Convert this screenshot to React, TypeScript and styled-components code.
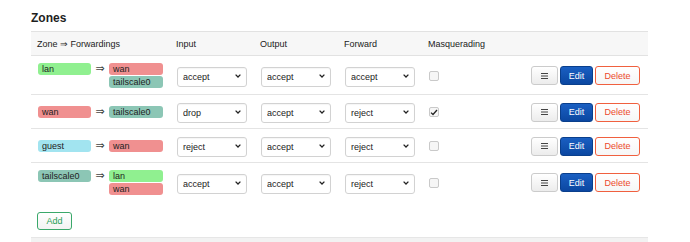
import React from "react";
import styled, { createGlobalStyle } from "styled-components";

const GlobalStyle = createGlobalStyle`
  body {
    margin: 0;
    background: #fff;
    font-family: "Liberation Sans", Arial, sans-serif;
    color: #333;
  }
`;

const StyledPage = styled.div`
  width: 617px;
  padding: 11px 0 0 31px;
`;

const StyledTitle = styled.h3`
  margin: 0 0 6px;
  font-size: 12px;
  line-height: 14px;
  font-weight: bold;
  color: #1e1e1e;
`;

const columns = "139px 84px 84px 84px 1fr auto";

const StyledHeader = styled.div`
  display: grid;
  grid-template-columns: ${columns};
  align-items: center;
  height: 25px;
  box-sizing: border-box;
  background: #f7f7f7;
  border-top: 1px solid #e2e2e2;
  border-bottom: 1px solid #e2e2e2;
  font-size: 9px;
  color: #222;

  > div {
    padding: 0 7px 0 6px;
  }
`;

const StyledRow = styled.div<{ last?: boolean }>`
  display: grid;
  grid-template-columns: ${columns};
  align-items: center;
  padding: 7px 0 6px;
  border-bottom: ${({ last }) => (last ? "none" : "1px solid #e4e4e4")};
`;

const StyledCell = styled.div`
  padding: 0 7px;
  display: flex;
  align-items: center;
`;

const StyledZoneCell = styled(StyledCell)`
  align-items: flex-start;
`;

const StyledArrow = styled.span`
  width: 18px;
  text-align: center;
  font-size: 11px;
  line-height: 11px;
  color: #444;
  font-family: "DejaVu Sans", sans-serif;
`;

const StyledDest = styled.div`
  display: flex;
  flex-direction: column;
  gap: 1px;
`;

const StyledBadge = styled.span<{ color: string }>`
  display: block;
  width: 54px;
  height: 12px;
  box-sizing: border-box;
  padding-left: 4px;
  border-radius: 3px;
  background: ${({ color }) => color};
  font-size: 9px;
  line-height: 12px;
  color: #222;
`;

const StyledSelectWrap = styled.div`
  position: relative;
  width: 71px;
  height: 20px;
`;

const StyledSelect = styled.select`
  appearance: none;
  width: 100%;
  height: 100%;
  box-sizing: border-box;
  border: 1px solid #d2d2d2;
  border-radius: 3px;
  background: #fff;
  padding: 0 0 0 5px;
  font-family: inherit;
  font-size: 9px;
  color: #222;
  box-shadow: inset 0 1px 1px rgba(0, 0, 0, 0.04);
  outline: none;
`;

const StyledChevron = styled.svg`
  position: absolute;
  right: 6px;
  top: 8px;
  pointer-events: none;
`;

const StyledCheck = styled.span`
  display: flex;
  align-items: center;
  justify-content: center;
  width: 10px;
  height: 10px;
  box-sizing: border-box;
  border: 1px solid #c9c9c9;
  border-radius: 2px;
  background: #f6f6f6;
`;

const StyledActions = styled.div`
  display: flex;
  gap: 2px;
  padding-right: 8px;
  justify-self: end;
`;

const buttonBase = `
  height: 19px;
  box-sizing: border-box;
  border-radius: 3px;
  font-family: "Liberation Sans", Arial, sans-serif;
  font-size: 9px;
  padding: 0;
  display: flex;
  align-items: center;
  justify-content: center;
  cursor: pointer;
`;

const StyledMenuButton = styled.button`
  ${buttonBase}
  width: 27px;
  border: 1px solid #cbcbcb;
  background: linear-gradient(#ffffff, #ececec);
`;

const StyledEditButton = styled.button`
  ${buttonBase}
  width: 33px;
  border: 1px solid #0a3f8c;
  background: linear-gradient(#1a5fc2, #0b47a1);
  color: #fff;
`;

const StyledDeleteButton = styled.button`
  ${buttonBase}
  width: 45px;
  border: 1px solid #f0603f;
  background: linear-gradient(#ffffff, #f6f6f6);
  color: #ec4a2c;
`;

const StyledAddButton = styled.button`
  ${buttonBase}
  width: 35px;
  height: 18px;
  margin: 11px 0 0 6px;
  border: 1px solid #3aa86a;
  background: linear-gradient(#ffffff, #f3f3f3);
  color: #1f9e55;
`;

const StyledFooterBar = styled.div`
  margin-top: 7px;
  height: 12px;
  background: #f2f2f2;
  border-top: 1px solid #e6e6e6;
`;

const ZONE_COLORS: Record<string, string> = {
  lan: "#90f090",
  wan: "#f09090",
  guest: "#a2e4f0",
  tailscale0: "#8cc6b5",
};

interface IZone {
  name: string;
  dest: string[];
  input: string;
  output: string;
  forward: string;
  masq: boolean;
}

const zones: IZone[] = [
  { name: "lan", dest: ["wan", "tailscale0"], input: "accept", output: "accept", forward: "accept", masq: false },
  { name: "wan", dest: ["tailscale0"], input: "drop", output: "accept", forward: "reject", masq: true },
  { name: "guest", dest: ["wan"], input: "reject", output: "accept", forward: "reject", masq: false },
  { name: "tailscale0", dest: ["lan", "wan"], input: "accept", output: "accept", forward: "reject", masq: false },
];

const Policy = ({ value }: { value: string }) => (
  <StyledSelectWrap>
    <StyledSelect defaultValue={value}>
      <option value="accept">accept</option>
      <option value="drop">drop</option>
      <option value="reject">reject</option>
    </StyledSelect>
    <StyledChevron width="6" height="4" viewBox="0 0 6 4">
      <path d="M0.6 0.6 L3 3 L5.4 0.6" fill="none" stroke="#222" strokeWidth="1.3" />
    </StyledChevron>
  </StyledSelectWrap>
);

const Checkbox = ({ checked }: { checked: boolean }) => (
  <StyledCheck>
    {checked && (
      <svg width="8" height="7" viewBox="0 0 8 7">
        <path d="M1 3.6 L3 5.5 L7 1" fill="none" stroke="#222" strokeWidth="1.3" />
      </svg>
    )}
  </StyledCheck>
);

const MenuIcon = () => (
  <svg width="7" height="6" viewBox="0 0 7 6">
    <path d="M0 0.5 H7 M0 3 H7 M0 5.5 H7" stroke="#444" strokeWidth="1" />
  </svg>
);

export default function App() {
  return (
    <>
      <GlobalStyle />
      <StyledPage>
        <StyledTitle>Zones</StyledTitle>
        <StyledHeader>
          <div>Zone ⇒ Forwardings</div>
          <div>Input</div>
          <div>Output</div>
          <div>Forward</div>
          <div>Masquerading</div>
          <div />
        </StyledHeader>
        {zones.map((z, i) => (
          <StyledRow key={z.name} last={i === zones.length - 1}>
            <StyledZoneCell>
              <StyledBadge color={ZONE_COLORS[z.name]}>{z.name}</StyledBadge>
              <StyledArrow>⇒</StyledArrow>
              <StyledDest>
                {z.dest.map((d) => (
                  <StyledBadge key={d} color={ZONE_COLORS[d]}>
                    {d}
                  </StyledBadge>
                ))}
              </StyledDest>
            </StyledZoneCell>
            <StyledCell>
              <Policy value={z.input} />
            </StyledCell>
            <StyledCell>
              <Policy value={z.output} />
            </StyledCell>
            <StyledCell>
              <Policy value={z.forward} />
            </StyledCell>
            <StyledCell>
              <Checkbox checked={z.masq} />
            </StyledCell>
            <StyledActions>
              <StyledMenuButton>
                <MenuIcon />
              </StyledMenuButton>
              <StyledEditButton>Edit</StyledEditButton>
              <StyledDeleteButton>Delete</StyledDeleteButton>
            </StyledActions>
          </StyledRow>
        ))}
        <StyledAddButton>Add</StyledAddButton>
        <StyledFooterBar />
      </StyledPage>
    </>
  );
}
